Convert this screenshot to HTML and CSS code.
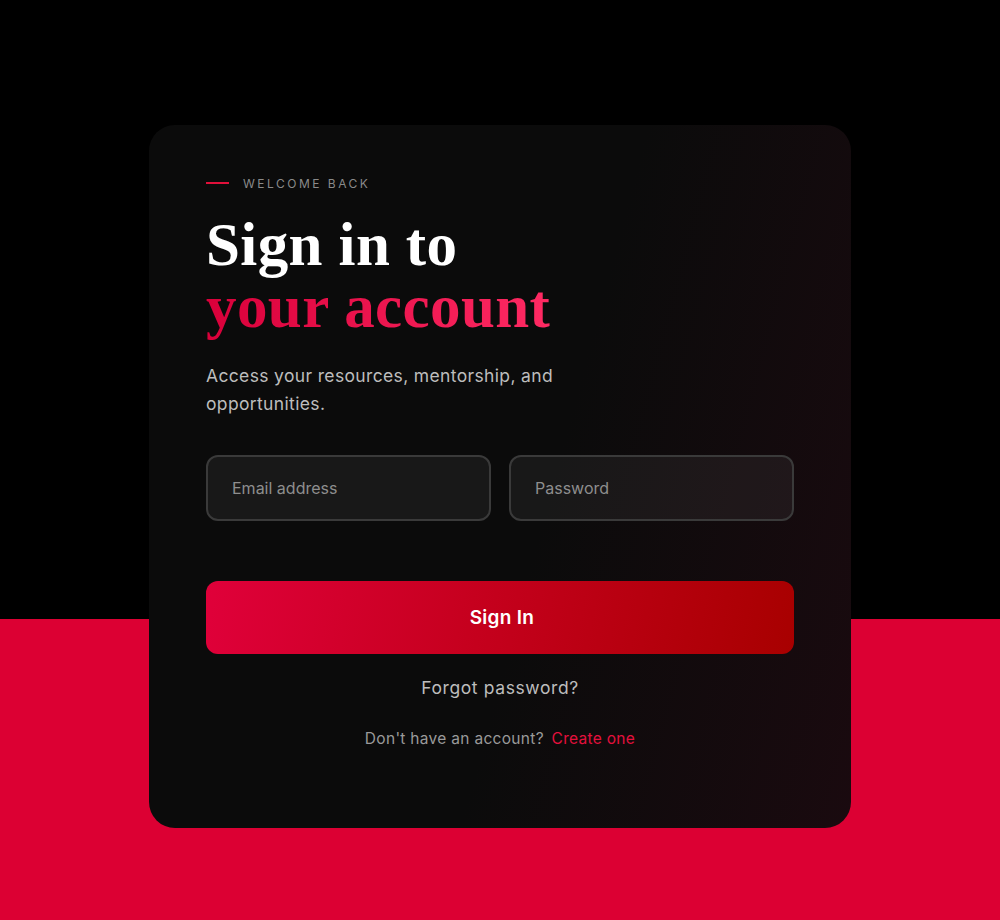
FILE: index.html
```html
<!DOCTYPE html>
<html lang="en">
<head>
<meta charset="utf-8">
<title>Sign in</title>
<link rel="stylesheet" href="styles.css">
</head>
<body>
<main class="page">
  <section class="card">
    <div class="eyebrow"><span class="eyebrow-line"></span><span class="eyebrow-text">WELCOME BACK</span></div>
    <h1 class="title"><span class="title-white">Sign in to</span><br><span class="title-accent">your account</span></h1>
    <p class="subtitle">Access your resources, mentorship, and opportunities.</p>
    <form class="form">
      <div class="fields">
        <input class="field" type="email" placeholder="Email address">
        <input class="field" type="password" placeholder="Password">
      </div>
      <button class="submit" type="button">Sign In</button>
    </form>
    <a class="forgot" href="#">Forgot password?</a>
    <p class="signup">Don't have an account? <a class="signup-link" href="#">Create one</a></p>
  </section>
</main>
</body>
</html>
```
FILE: styles.css
```css
* { box-sizing: border-box; }
html, body { margin: 0; padding: 0; }
body {
  width: 1000px;
  height: 920px;
  background: linear-gradient(to bottom, #000 0, #000 619px, #dc0033 619px, #dc0033 100%);
  font-family: Inter, "Open Sans", "Liberation Sans", sans-serif;
  overflow: hidden;
}
.page {
  display: flex;
  justify-content: center;
  padding-top: 125px;
}
.card {
  width: 702px;
  border-radius: 26px;
  background: linear-gradient(105deg, #0b0b0b 0%, #0b0b0b 56%, #1a0a0f 100%);
  padding: 50px 57px 78px 57px;
  display: flex;
  flex-direction: column;
}
.eyebrow {
  display: flex;
  align-items: center;
  gap: 14px;
  height: 16px;
}
.eyebrow-line {
  width: 23px;
  height: 2px;
  background: #e0103a;
}
.eyebrow-text {
  font-size: 12px;
  letter-spacing: 2.5px;
  color: #8a8a8a;
}
.title {
  margin: 23px 0 0 0;
  font-family: "Liberation Serif", "DejaVu Serif", serif;
  font-weight: 700;
  font-size: 61px;
  line-height: 62px;
  letter-spacing: 0.4px;
}
.title-white { color: #fff; }
.title-accent {
  background: linear-gradient(90deg, #d9003a 0%, #ff2a63 100%);
  -webkit-background-clip: text;
  background-clip: text;
  color: transparent;
}
.subtitle {
  margin: 24px 0 0 0;
  width: 380px;
  font-size: 17.5px;
  line-height: 28px;
  letter-spacing: 0.35px;
  color: #bdbdbd;
}
.form {
  margin-top: 37px;
  display: flex;
  flex-direction: column;
  gap: 60px;
}
.fields {
  display: flex;
  gap: 18px;
}
.field {
  flex: 1;
  min-width: 0;
  height: 66px;
  border: 2px solid #3a3a3a;
  border-radius: 12px;
  background: rgba(255, 255, 255, 0.055);
  padding: 0 24px;
  font-family: inherit;
  font-size: 16px;
  color: #ddd;
  outline: none;
}
.field::placeholder { color: #8e8e8e; }
.submit {
  height: 73px;
  border: none;
  border-radius: 12px;
  background: linear-gradient(100deg, #e0003a 0%, #c6001e 45%, #a80000 100%);
  color: #fff;
  font-family: inherit;
  font-size: 19px;
  font-weight: 600;
  letter-spacing: 0.3px;
  padding-left: 10px;
}
.forgot {
  margin-top: 21px;
  align-self: center;
  font-size: 17.5px;
  line-height: 26px;
  letter-spacing: 0.6px;
  color: #bdbdbd;
  text-decoration: none;
}
.signup {
  margin: 27px 0 0 0;
  text-align: center;
  font-size: 15.5px;
  line-height: 22px;
  letter-spacing: 0.3px;
  color: #9a9a9a;
}
.signup-link {
  margin-left: 3px;
  color: #e5103c;
  text-decoration: none;
}
```
